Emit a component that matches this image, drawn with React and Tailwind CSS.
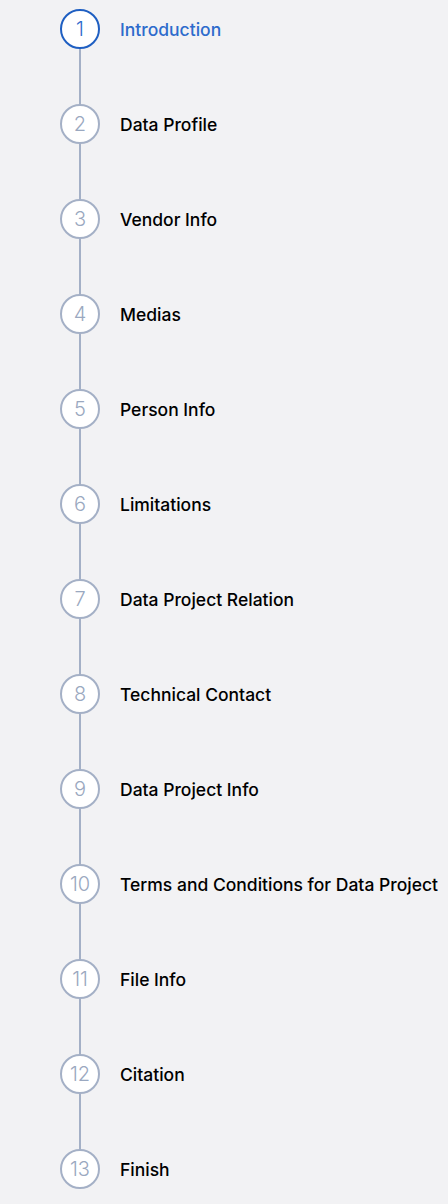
const steps = [
  'Introduction',
  'Data Profile',
  'Vendor Info',
  'Medias',
  'Person Info',
  'Limitations',
  'Data Project Relation',
  'Technical Contact',
  'Data Project Info',
  'Terms and Conditions for Data Project',
  'File Info',
  'Citation',
  'Finish',
];

function Step({ index, label, active, last }) {
  return (
    <div className="flex">
      <div className="flex flex-col items-center w-10">
        <div
          className={
            active
              ? 'w-10 h-10 rounded-full border-2 border-[#1f5fc2] bg-white flex items-center justify-center text-[20px] font-light text-[#2d6bcc]'
              : 'w-10 h-10 rounded-full border-2 border-[#a4b0c6] bg-white flex items-center justify-center text-[20px] font-light text-[#9aa8c0]'
          }
        >
          {index}
        </div>
        {!last && <div className="w-[2px] h-[55px] bg-[#a4b0c6]" />}
      </div>
      <div
        className={
          active
            ? 'ml-5 h-10 pt-[2px] flex items-center text-[17.5px] font-medium text-[#2d6bcc] whitespace-nowrap'
            : 'ml-5 h-10 pt-[2px] flex items-center text-[17.5px] font-medium text-black whitespace-nowrap'
        }
      >
        {label}
      </div>
    </div>
  );
}

export default function App() {
  return (
    <div className="min-h-screen bg-[#f2f2f4] pl-[60px] pt-[9px] pb-[15px] font-['Inter',sans-serif]">
      {steps.map((label, i) => (
        <Step
          key={label}
          index={i + 1}
          label={label}
          active={i === 0}
          last={i === steps.length - 1}
        />
      ))}
    </div>
  );
}
